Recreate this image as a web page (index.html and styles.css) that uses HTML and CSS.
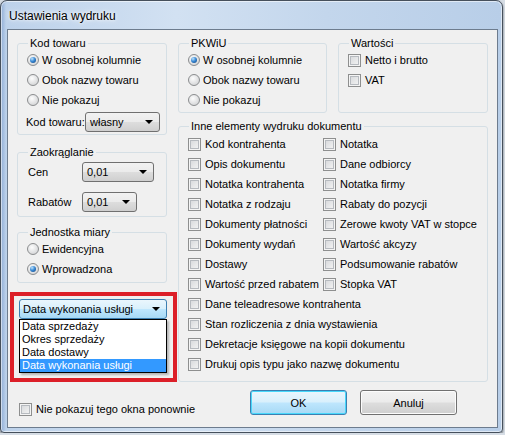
FILE: index.html
```html
<!DOCTYPE html>
<html lang="pl">
<head>
  <meta charset="UTF-8" />
  <title>Ustawienia wydruku</title>
  <link rel="stylesheet" href="styles.css">
</head>
<body>
  <div class="window">
    <div class="titlebar">Ustawienia wydruku</div>

    <div class="client">
      <div class="columns">

        <div class="left-col">
          <fieldset class="group group-kod">
            <legend>Kod towaru</legend>
            <div class="opt"><span class="radio on"></span>W osobnej kolumnie</div>
            <div class="opt"><span class="radio"></span>Obok nazwy towaru</div>
            <div class="opt"><span class="radio"></span>Nie pokazuj</div>
            <div class="field-row kod-row">
              <span class="field-label">Kod towaru:</span>
              <span class="combo combo-kod">własny</span>
            </div>
          </fieldset>

          <fieldset class="group group-zaok">
            <legend>Zaokrąglanie</legend>
            <div class="field-row">
              <span class="field-label">Cen</span>
              <span class="combo combo-cen">0,01</span>
            </div>
            <div class="field-row second">
              <span class="field-label">Rabatów</span>
              <span class="combo combo-rab">0,01</span>
            </div>
          </fieldset>

          <fieldset class="group group-jm">
            <legend>Jednostka miary</legend>
            <div class="opt"><span class="radio"></span>Ewidencyjna</div>
            <div class="opt"><span class="radio on"></span>Wprowadzona</div>
          </fieldset>

          <div class="highlight">
            <div class="combo combo-hot">Data wykonania usługi</div>
            <ul class="dropdown">
              <li>Data sprzedaży</li>
              <li>Okres sprzedaży</li>
              <li>Data dostawy</li>
              <li class="selected">Data wykonania usługi</li>
            </ul>
          </div>
        </div>

        <div class="right-col">
          <div class="top-groups">
            <fieldset class="group group-pkwiu">
              <legend>PKWiU</legend>
              <div class="opt"><span class="radio on"></span>W osobnej kolumnie</div>
              <div class="opt"><span class="radio"></span>Obok nazwy towaru</div>
              <div class="opt"><span class="radio"></span>Nie pokazuj</div>
            </fieldset>

            <fieldset class="group group-wart">
              <legend>Wartości</legend>
              <div class="opt"><span class="check"></span>Netto i brutto</div>
              <div class="opt"><span class="check"></span>VAT</div>
            </fieldset>
          </div>

          <fieldset class="group group-inne">
            <legend>Inne elementy wydruku dokumentu</legend>
            <div class="check-grid">
              <div class="opt"><span class="check"></span>Kod kontrahenta</div>
              <div class="opt"><span class="check"></span>Notatka</div>
              <div class="opt"><span class="check"></span>Opis dokumentu</div>
              <div class="opt"><span class="check"></span>Dane odbiorcy</div>
              <div class="opt"><span class="check"></span>Notatka kontrahenta</div>
              <div class="opt"><span class="check"></span>Notatka firmy</div>
              <div class="opt"><span class="check"></span>Notatka z rodzaju</div>
              <div class="opt"><span class="check"></span>Rabaty do pozycji</div>
              <div class="opt"><span class="check"></span>Dokumenty płatności</div>
              <div class="opt"><span class="check"></span>Zerowe kwoty VAT w stopce</div>
              <div class="opt"><span class="check"></span>Dokumenty wydań</div>
              <div class="opt"><span class="check"></span>Wartość akcyzy</div>
              <div class="opt"><span class="check"></span>Dostawy</div>
              <div class="opt"><span class="check"></span>Podsumowanie rabatów</div>
              <div class="opt"><span class="check"></span>Wartość przed rabatem</div>
              <div class="opt"><span class="check"></span>Stopka VAT</div>
            </div>
            <div class="opt"><span class="check"></span>Dane teleadresowe kontrahenta</div>
            <div class="opt"><span class="check"></span>Stan rozliczenia z dnia wystawienia</div>
            <div class="opt"><span class="check"></span>Dekretacje księgowe na kopii dokumentu</div>
            <div class="opt"><span class="check"></span>Drukuj opis typu jako nazwę dokumentu</div>
          </fieldset>
        </div>
      </div>

      <div class="bottom-bar">
        <div class="opt dont-show"><span class="check"></span>Nie pokazuj tego okna ponownie</div>
        <div class="buttons">
          <button class="btn btn-default">OK</button>
          <button class="btn">Anuluj</button>
        </div>
      </div>
    </div>
  </div>
</body>
</html>
```

FILE: styles.css
```css
* {
  box-sizing: border-box;
}

body {
  margin: 0;
  background: #d6dde5;
  font-family: 'Liberation Sans', Arial, sans-serif;
  font-size: 11px;
  color: #000;
}

/* window frame */
.window {
  width: 503px;
  height: 433px;
  display: flex;
  flex-direction: column;
  padding: 0 4px 4px 6px;
  border: 1px solid #46505c;
  border-radius: 7px 7px 4px 4px;
  background:
    linear-gradient(to right, rgba(90, 130, 190, 0.45) 0, rgba(90, 130, 190, 0) 5px),
    linear-gradient(to right, #bcd1ea, #d2e1f2 35%, #c3d6ec 65%, #b8cee8);
  box-shadow: inset 0 0 0 1px rgba(255, 255, 255, 0.55), 0 1px 2px rgba(0, 0, 0, 0.6);
}

.titlebar {
  height: 28px;
  padding: 8px 0 0 2px;
  font-size: 12px;
  line-height: 14px;
  text-shadow: 0 0 6px #fff, 0 0 3px #fff;
}

.client {
  flex: 1;
  padding: 6px 9px 0 9px;
  background: #f0f0f0;
  border: 1px solid #6d7c8e;
}

.columns {
  display: flex;
  gap: 11px;
}

.left-col {
  width: 150px;
  display: flex;
  flex-direction: column;
}

.right-col {
  width: 310px;
}

/* group boxes */
.group {
  margin: 0;
  padding: 0 6px 2px 9px;
  border: 1px solid #d5dfe5;
  border-radius: 3px;
}

.group legend {
  margin-left: 1px;
  padding: 0 2px;
  line-height: 14px;
}

.group-zaok {
  margin-top: 10px;
  padding-bottom: 4px;
}

.group-jm {
  margin-top: 8px;
  padding-bottom: 3px;
}

.top-groups {
  display: flex;
  gap: 11px;
}

.group-pkwiu {
  width: 149px;
}

.group-wart {
  width: 150px;
}

.group-inne {
  margin-top: 6px;
  padding-top: 1px;
  padding-bottom: 7px;
}

.check-grid {
  display: grid;
  grid-template-columns: 135px 1fr;
}

/* radios and checkboxes */
.opt {
  height: 20px;
  display: flex;
  align-items: center;
  white-space: nowrap;
}

.radio {
  position: relative;
  flex: none;
  width: 12px;
  height: 12px;
  margin-right: 3px;
  border: 1px solid #8b8d8f;
  border-radius: 50%;
  background: radial-gradient(circle at 40% 35%, #fdfdfd, #d2d3d5 85%);
}

.radio.on::after {
  content: '';
  position: absolute;
  left: 2px;
  top: 2px;
  width: 6px;
  height: 6px;
  border-radius: 50%;
  background: radial-gradient(circle at 35% 30%, #bfe3fb 0, #3a8ad6 45%, #0d3e78 100%);
}

.check {
  flex: none;
  width: 13px;
  height: 13px;
  margin-right: 4px;
  border: 1px solid #8e8f8f;
  background: linear-gradient(135deg, #d3d5d8, #f7f7f7);
  box-shadow: inset 0 0 0 1px #f4f4f4, inset 0 0 0 2px #b6babf;
}

/* combo boxes */
.field-row {
  height: 20px;
  display: flex;
  align-items: center;
}

.kod-row {
  margin-top: 2px;
}

.kod-row .field-label {
  width: 59px;
  margin-left: -1px;
}

.group-zaok .field-row {
  margin-top: 3px;
}

.group-zaok .field-row.second {
  margin-top: 10px;
}

.group-zaok .field-label {
  width: 55px;
  padding-left: 1px;
}

.combo {
  height: 20px;
  display: flex;
  align-items: center;
  padding: 0 6px 0 4px;
  border: 1px solid #707070;
  border-radius: 3px;
  background: linear-gradient(#f2f2f2 0%, #ebebeb 48%, #dddddd 52%, #cfcfcf 100%);
}

.combo::after {
  content: '';
  margin-left: auto;
  border-left: 4px solid transparent;
  border-right: 4px solid transparent;
  border-top: 4px solid #000;
}

.combo-kod {
  width: 75px;
}

.combo-cen {
  width: 72px;
}

.combo-rab {
  width: 55px;
}

.combo-hot {
  width: 148px;
  padding-left: 3px;
  border-color: #3c7fb1;
  background: linear-gradient(#eaf6fd 0%, #d9f0fc 48%, #bee6fd 52%, #a7d9f5 100%);
}

/* highlighted area with open list */
.highlight {
  margin: 9px -10px 0 -7px;
  padding: 3px 0 5px 5px;
  border: 4px solid #dc1f28;
}

.dropdown {
  width: 148px;
  margin: 0;
  padding: 0;
  list-style: none;
  background: #fff;
  border: 1px solid #000;
  box-shadow: 2px 2px 2px rgba(0, 0, 0, 0.25);
}

.dropdown li {
  height: 13px;
  line-height: 13px;
  padding-left: 2px;
}

.dropdown li.selected {
  background: #3399ff;
  color: #fff;
}

/* bottom bar */
.bottom-bar {
  display: flex;
  align-items: flex-start;
  margin-top: 8px;
}

.dont-show {
  margin-top: 9px;
  padding-left: 2px;
}

.buttons {
  display: flex;
  gap: 13px;
  margin-left: auto;
  margin-right: 31px;
}

.btn {
  width: 97px;
  height: 25px;
  padding: 0;
  font-family: inherit;
  font-size: 11px;
  color: #000;
  border: 1px solid #707070;
  border-radius: 3px;
  background: linear-gradient(#f2f2f2 0%, #ebebeb 48%, #dddddd 52%, #cfcfcf 100%);
  box-shadow: inset 0 0 0 1px #fcfcfc;
}

.btn-default {
  border-color: #3c7fb1;
  background: linear-gradient(#eaf6fd 0%, #d9f0fc 48%, #bee6fd 52%, #a7d9f5 100%);
  box-shadow: inset 0 0 0 1px #48d8fb;
}
```
